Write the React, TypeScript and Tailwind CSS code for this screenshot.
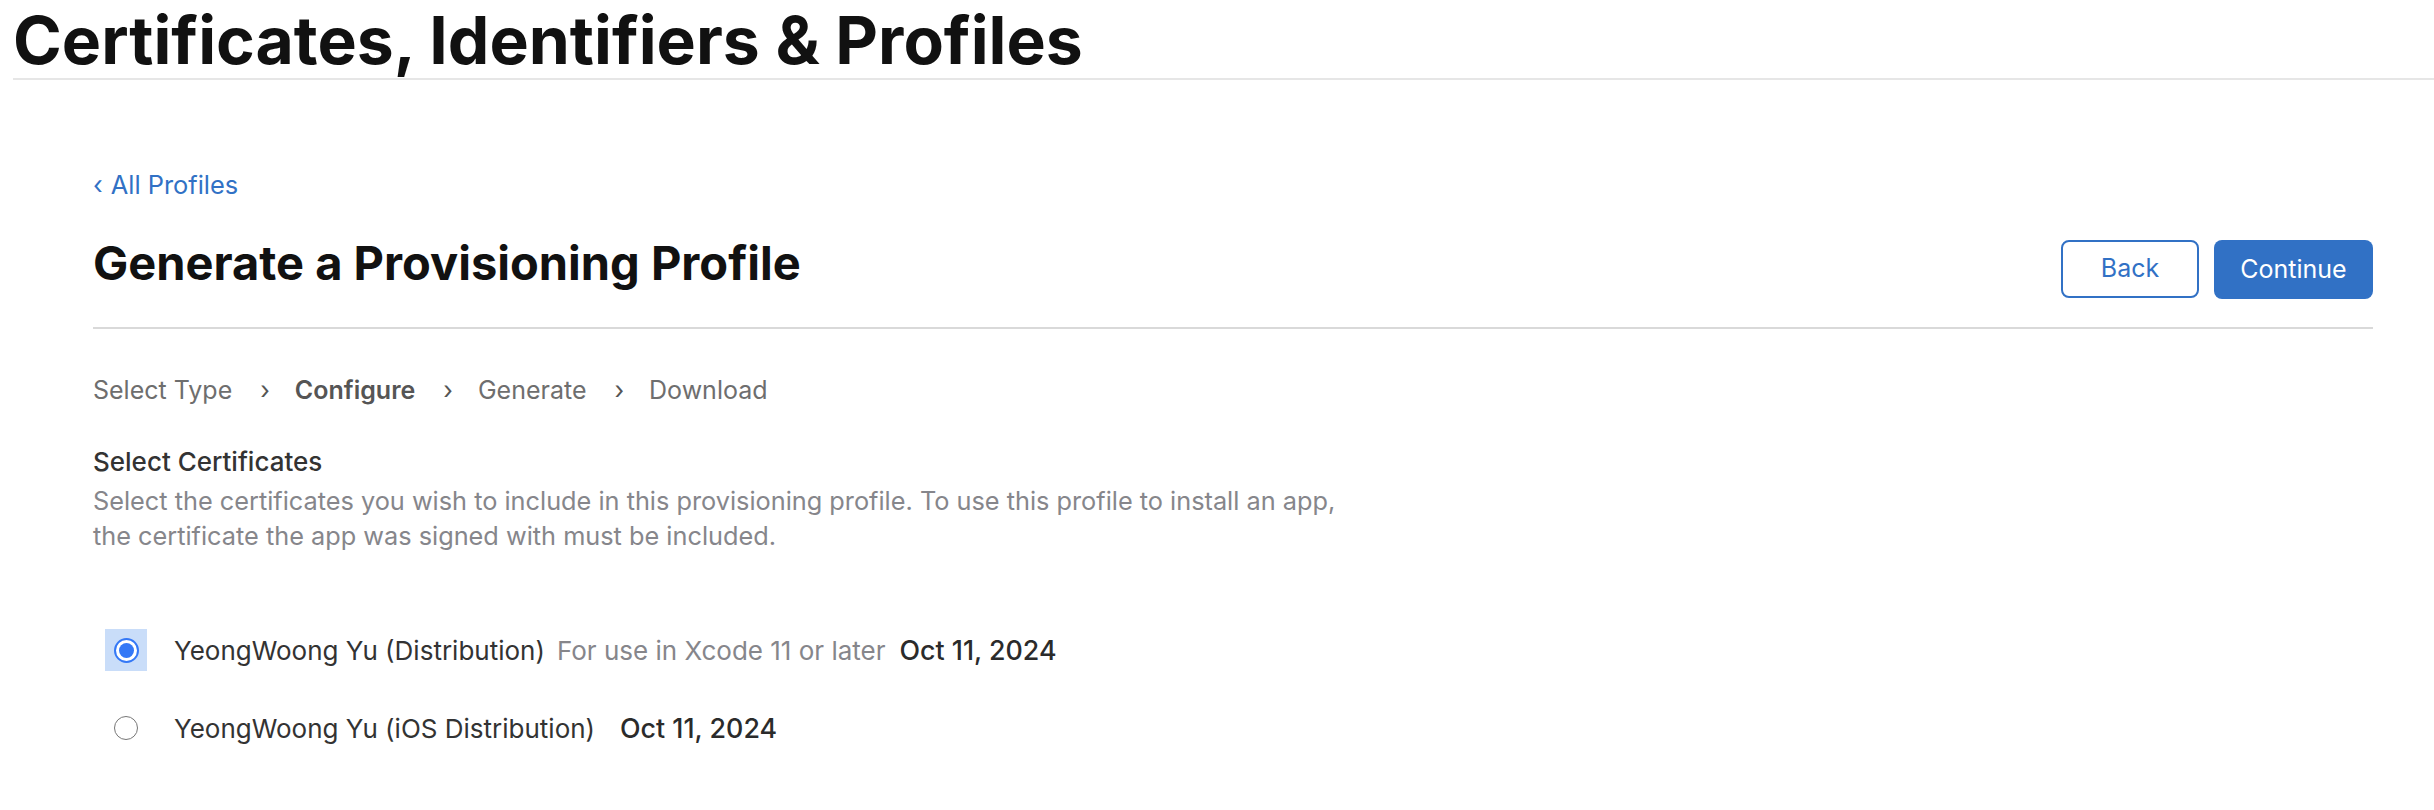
import React from 'react';

interface CertRow {
  name: string;
  note?: string;
  date: string;
  selected: boolean;
}

const rows: CertRow[] = [
  { name: 'YeongWoong Yu (Distribution)', note: 'For use in Xcode 11 or later', date: 'Oct 11, 2024', selected: true },
  { name: 'YeongWoong Yu (iOS Distribution)', date: 'Oct 11, 2024', selected: false },
];

const steps = ['Select Type', 'Configure', 'Generate', 'Download'];

const Radio: React.FC<{ checked: boolean }> = ({ checked }) => (
  <div
    className={`w-[42px] h-[42px] flex items-center justify-center ${checked ? 'bg-[#c9ddf9]' : ''}`}
  >
    {checked ? (
      <div className="w-[25px] h-[25px] rounded-full border-2 border-[#3478f6] bg-white flex items-center justify-center">
        <div className="w-[15px] h-[15px] rounded-full bg-[#3478f6]"></div>
      </div>
    ) : (
      <div className="w-[24px] h-[24px] rounded-full border-[1.5px] border-[#767676] bg-white"></div>
    )}
  </div>
);

export default function App() {
  return (
    <div className="min-h-[810px] bg-white text-[#333] font-['Inter','Liberation_Sans',sans-serif]">
      {/* page header */}
      <div className="ml-[13px] pt-[7px] pb-[5px] border-b-2 border-[#e6e6e6]">
        <h1 className="text-[66px] leading-[66px] font-bold text-[#111]">
          Certificates, Identifiers &amp; Profiles
        </h1>
      </div>

      <div className="pl-[93px] pr-[61px]">
        <div className="mt-[89px] text-[25.4px] leading-[32px] text-[#3171c5]">
          <span className="mr-[8px]">‹</span>All Profiles
        </div>

        <div className="mt-[38px] pb-[28px] border-b-2 border-[#d9d9d9] flex items-start justify-between">
          <h2 className="text-[47px] leading-[48px] font-bold text-[#111]">Generate a Provisioning Profile</h2>
          <div className="flex gap-[15px] mt-px">
            <button className="w-[138px] h-[58px] rounded-[8px] border-2 border-[#3171c5] text-[#3171c5] text-[25px]">
              Back
            </button>
            <button className="w-[159px] h-[59px] rounded-[8px] bg-[#3171c5] text-white text-[25px]">
              Continue
            </button>
          </div>
        </div>

        <div className="mt-[45px] flex items-center text-[25px] leading-[32px] text-[#6e6e6e]">
          {steps.map((s, i) => (
            <React.Fragment key={s}>
              {i > 0 && <span className="ml-[28px] mr-[25px] text-[#555]">›</span>}
              <span className={s === 'Configure' ? 'font-semibold text-[#555]' : ''}>{s}</span>
            </React.Fragment>
          ))}
        </div>

        <div className="mt-[38px] text-[26px] leading-[35px] font-medium text-[#333]">Select Certificates</div>
        <p className="mt-[4px] text-[25.3px] leading-[35px] text-[#86868b]">
          Select the certificates you wish to include in this provisioning profile. To use this profile to install an app,
          <br />
          the certificate the app was signed with must be included.
        </p>

        <div className="mt-[76px] flex flex-col gap-[36px]">
          {rows.map((r) => (
            <div key={r.name} className="flex items-center text-[26px] ml-[12px]">
              <Radio checked={r.selected} />
              <span className="ml-[27px] text-[#333]">{r.name}</span>
              {r.note && <span className="ml-[12px] text-[#86868b]">{r.note}</span>}
              <span
                className={
                  r.note
                    ? 'ml-[14px] text-[26.8px] font-medium text-[#2b2b2b]'
                    : 'ml-[25px] text-[26.8px] font-medium text-[#2b2b2b]'
                }
              >
                {r.date}
              </span>
            </div>
          ))}
        </div>
      </div>
    </div>
  );
}
